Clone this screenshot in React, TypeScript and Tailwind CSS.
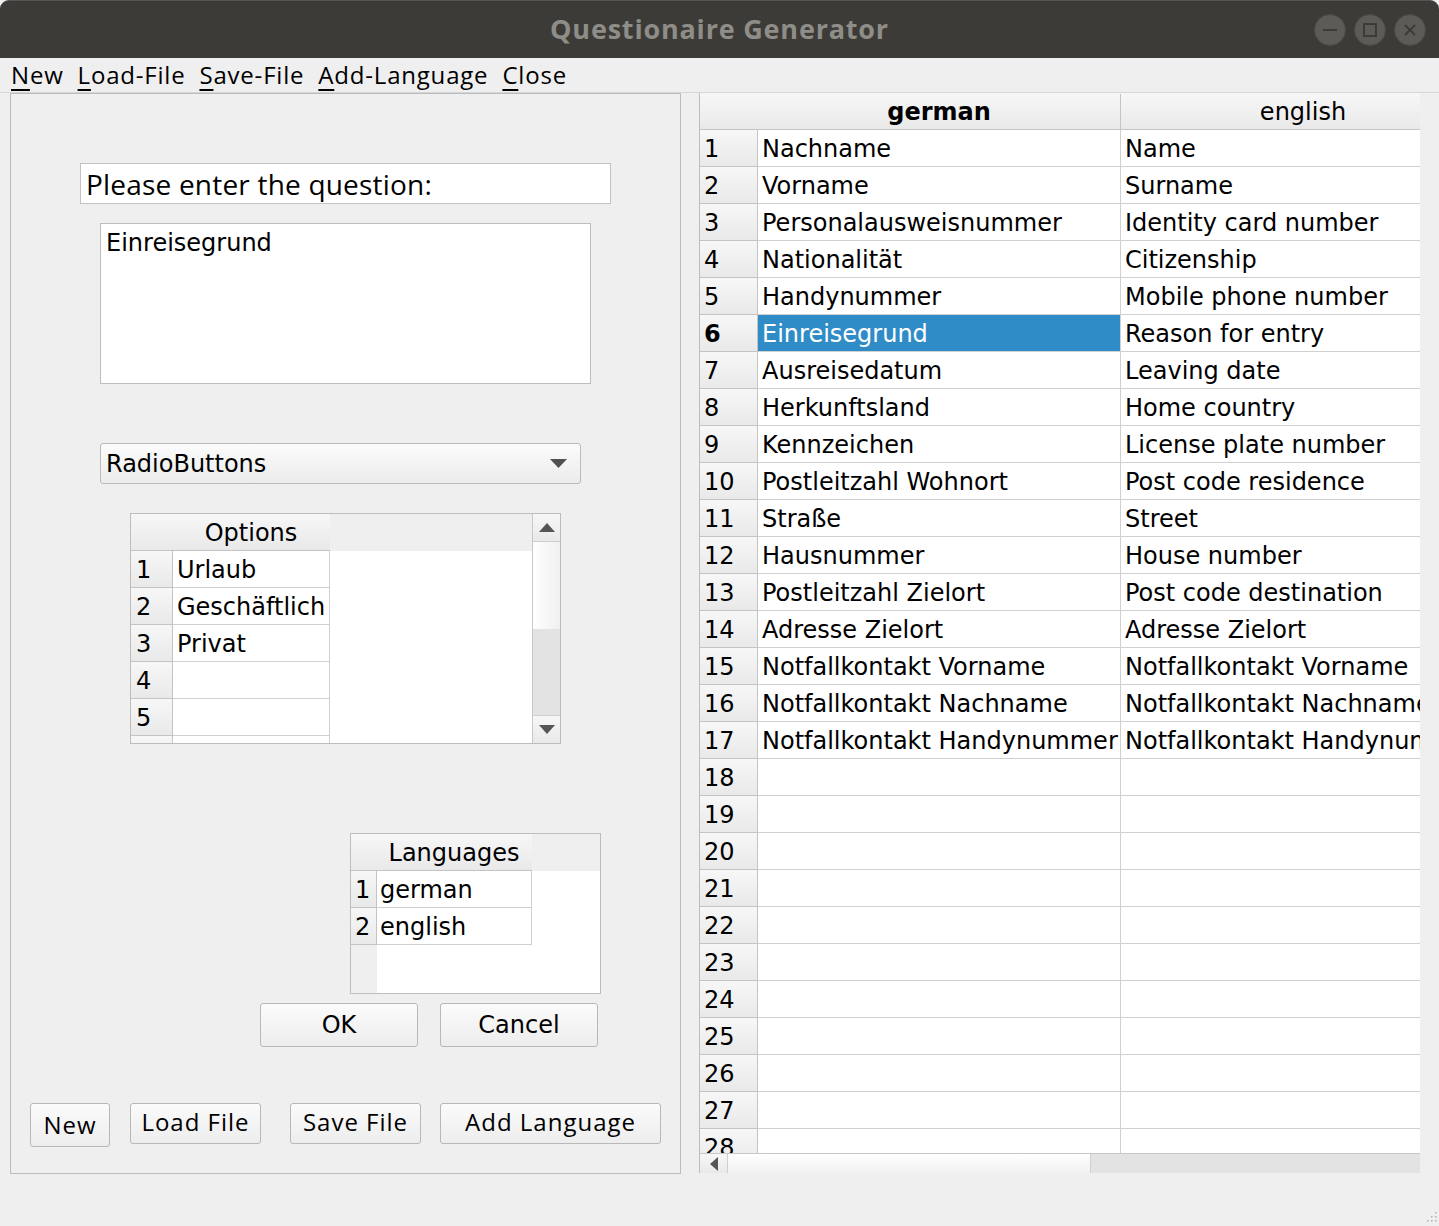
import React from "react";

const DV = "font-['DejaVu_Sans',sans-serif]";
const UB = "font-['Open_Sans',sans-serif]";

const rows: [string, string][] = [
  ["Nachname", "Name"],
  ["Vorname", "Surname"],
  ["Personalausweisnummer", "Identity card number"],
  ["Nationalität", "Citizenship"],
  ["Handynummer", "Mobile phone number"],
  ["Einreisegrund", "Reason for entry"],
  ["Ausreisedatum", "Leaving date"],
  ["Herkunftsland", "Home country"],
  ["Kennzeichen", "License plate number"],
  ["Postleitzahl Wohnort", "Post code residence"],
  ["Straße", "Street"],
  ["Hausnummer", "House number"],
  ["Postleitzahl Zielort", "Post code destination"],
  ["Adresse Zielort", "Adresse Zielort"],
  ["Notfallkontakt Vorname", "Notfallkontakt Vorname"],
  ["Notfallkontakt Nachname", "Notfallkontakt Nachname"],
  ["Notfallkontakt Handynummer", "Notfallkontakt Handynummer"],
];
while (rows.length < 28) rows.push(["", ""]);

const HDR = "bg-gradient-to-b from-[#f7f7f7] to-[#e9e9e9]";

function MenuItem({ k, rest }: { k: string; rest: string }) {
  return (
    <span>
      <span className="underline decoration-2 underline-offset-[5px]">{k}</span>
      {rest}
    </span>
  );
}

function Btn({ label, className }: { label: string; className: string }) {
  return (
    <div
      className={`flex items-center justify-center rounded-[3px] border border-[#b8b8b8] bg-gradient-to-b from-[#fbfbfb] to-[#ededed] text-[24px] text-black ${className}`}
    >
      {label}
    </div>
  );
}

function TitleBar() {
  return (
    <div className="relative flex h-[58px] items-center justify-center rounded-t-[9px] border-t border-[#55544f] bg-[#3c3b37]">
      <span className={`${UB} text-[27px] font-bold tracking-[0.8px] text-[#8e8d88]`}>Questionaire Generator</span>
      <div className="absolute right-[13px] top-[13px] flex gap-[8px]">
        <div className="flex h-[32px] w-[32px] items-center justify-center rounded-full border border-[#4a4945] bg-[#5c5b56]">
          <div className="h-[2px] w-[14px] bg-[#3c3b37]" />
        </div>
        <div className="flex h-[32px] w-[32px] items-center justify-center rounded-full border border-[#4a4945] bg-[#5c5b56]">
          <div className="h-[14px] w-[14px] border-2 border-[#3c3b37]" />
        </div>
        <div className="flex h-[32px] w-[32px] items-center justify-center rounded-full border border-[#4a4945] bg-[#5c5b56]">
          <svg width="14" height="14" viewBox="0 0 14 14">
            <path d="M2 2 L12 12 M12 2 L2 12" stroke="#3c3b37" strokeWidth="2" />
          </svg>
        </div>
      </div>
    </div>
  );
}

function OptionsTable() {
  const opts = ["Urlaub", "Geschäftlich", "Privat", "", "", ""];
  return (
    <div className={`ml-[119px] mt-[29px] flex h-[231px] w-[431px] border border-[#bdbdbd] bg-white ${DV} text-[24px]`}>
      <div className="flex h-full w-[402px] flex-col overflow-hidden">
        <div className="flex h-[37px] shrink-0">
          <div className={`flex w-[199px] items-center justify-center border-b border-[#c4c4c4] pt-[1px] ${HDR}`}>
            <span className="pl-[41px]">Options</span>
          </div>
          <div className="flex-1 bg-[#efefef]" />
        </div>
        {opts.map((o, i) => (
          <div key={i} className="flex h-[37px] shrink-0">
            <div className={`flex w-[42px] items-center border-b border-r border-[#c4c4c4] pl-[5px] pt-[1px] ${HDR}`}>
              {i < 5 ? i + 1 : ""}
            </div>
            <div className="flex w-[157px] items-center border-b border-r border-[#d0d0d0] pl-[4px] pt-[1px]">{o}</div>
          </div>
        ))}
      </div>
      <div className="flex w-[28px] flex-col border-l border-[#c8c8c8]">
        <div className={`flex h-[28px] items-center justify-center border-b border-[#cfcfcf] ${HDR}`}>
          <svg width="16" height="9" viewBox="0 0 16 9">
            <polygon points="0,9 16,9 8,0" fill="#555" />
          </svg>
        </div>
        <div className="h-[87px] bg-gradient-to-r from-[#ffffff] to-[#f0f0f0]" />
        <div className="flex-1 bg-[#e3e3e3]" />
        <div className={`flex h-[28px] items-center justify-center border-t border-[#cfcfcf] ${HDR}`}>
          <svg width="16" height="9" viewBox="0 0 16 9">
            <polygon points="0,0 16,0 8,9" fill="#555" />
          </svg>
        </div>
      </div>
    </div>
  );
}

function LanguagesTable() {
  return (
    <div className={`ml-[339px] mt-[89px] flex h-[161px] w-[251px] flex-col overflow-hidden border border-[#bdbdbd] bg-white ${DV} text-[24px]`}>
      <div className="flex h-[37px] shrink-0">
        <div className={`flex w-[181px] items-center justify-center border-b border-[#c4c4c4] pt-[1px] ${HDR}`}>
          <span className="pl-[25px]">Languages</span>
        </div>
        <div className="flex-1 bg-[#efefef]" />
      </div>
      {["german", "english"].map((l, i) => (
        <div key={i} className="flex h-[37px] shrink-0">
          <div className={`flex w-[26px] items-center border-b border-r border-[#c4c4c4] pl-[4px] pt-[1px] ${HDR}`}>{i + 1}</div>
          <div className="flex w-[155px] items-center border-b border-r border-[#d0d0d0] pl-[3px] pt-[1px]">{l}</div>
        </div>
      ))}
      <div className="flex flex-1">
        <div className="w-[26px] bg-[#efefef]" />
      </div>
    </div>
  );
}

function LeftPanel() {
  return (
    <div className="ml-[10px] flex h-[1081px] w-[671px] flex-col border border-[#bcbcbc] bg-[#efefef]">
      <div className={`ml-[69px] mt-[69px] flex h-[41px] w-[531px] items-center border border-[#c2c2c2] bg-white pl-[5px] ${UB} text-[28px] tracking-[0.2px]`}>
        Please enter the question:
      </div>
      <div className={`ml-[89px] mt-[19px] h-[161px] w-[491px] border border-[#bdbdbd] bg-white pl-[5px] pt-[1px] ${DV} text-[24px]`}>
        Einreisegrund
      </div>
      <div className={`ml-[89px] mt-[59px] flex h-[41px] w-[481px] items-center justify-between rounded-[3px] border border-[#bababa] bg-gradient-to-b from-[#fbfbfb] to-[#ececec] pl-[5px] pr-[13px] ${DV} text-[24px]`}>
        <span className="pt-[1px]">RadioButtons</span>
        <svg width="17" height="9" viewBox="0 0 17 9">
          <polygon points="0,0 17,0 8.5,9" fill="#505050" />
        </svg>
      </div>
      <OptionsTable />
      <LanguagesTable />
      <div className={`mt-[9px] flex ${DV}`}>
        <Btn label="OK" className="ml-[249px] h-[44px] w-[158px]" />
        <Btn label="Cancel" className="ml-[22px] h-[44px] w-[158px]" />
      </div>
      <div className={`mt-[56px] flex items-start ${UB} tracking-[1px]`}>
        <Btn label="New" className="ml-[19px] h-[44px] w-[80px]" />
        <Btn label="Load File" className="ml-[20px] h-[41px] w-[131px] pb-[3px]" />
        <Btn label="Save File" className="ml-[29px] h-[41px] w-[131px] pb-[3px]" />
        <Btn label="Add Language" className="ml-[19px] h-[41px] w-[221px] pb-[3px]" />
      </div>
    </div>
  );
}

function MainTable() {
  return (
    <div className={`ml-[18px] flex h-[1080px] w-[721px] flex-col overflow-hidden border-l border-[#bdbdbd] bg-white ${DV} text-[24px]`}>
      <div className={`flex h-[37px] shrink-0 border-b border-[#c4c4c4] pt-[1px] ${HDR}`}>
        <div className="w-[58px] shrink-0" />
        <div className="flex w-[363px] shrink-0 items-center justify-center border-r border-[#c4c4c4] font-bold">german</div>
        <div className="flex w-[364px] shrink-0 items-center justify-center">english</div>
      </div>
      <div className="h-[1023px] shrink-0 overflow-hidden">
        {rows.map(([g, e], i) => {
          const sel = i === 5;
          return (
            <div key={i} className="flex h-[37px] shrink-0">
              <div className={`flex w-[58px] shrink-0 items-center border-b border-r border-[#c4c4c4] pl-[4px] pt-[1px] ${HDR} ${sel ? "font-bold" : ""}`}>
                {i + 1}
              </div>
              <div
                className={`flex w-[363px] shrink-0 items-center overflow-hidden whitespace-nowrap border-b border-r border-[#d0d0d0] pl-[4px] pt-[1px] ${sel ? "bg-[#308cc6] text-white" : ""}`}
              >
                {g}
              </div>
              <div className="flex w-[364px] shrink-0 items-center overflow-hidden whitespace-nowrap border-b border-[#d0d0d0] pl-[4px] pt-[1px]">
                {e}
              </div>
            </div>
          );
        })}
      </div>
      <div className="flex h-[20px] shrink-0 border-t border-[#c8c8c8]">
        <div className={`flex w-[28px] items-center justify-center border-r border-[#cfcfcf] ${HDR}`}>
          <svg width="8" height="14" viewBox="0 0 8 14">
            <polygon points="8,0 8,14 0,7" fill="#555" />
          </svg>
        </div>
        <div className="w-[363px] border-r border-[#d0d0d0] bg-gradient-to-b from-[#ffffff] to-[#f1f1f1]" />
        <div className="flex-1 bg-[#e3e3e3]" />
      </div>
    </div>
  );
}

export default function App() {
  return (
    <div className="relative h-[1226px] w-[1439px] overflow-hidden bg-[#efefef] text-black">
      <TitleBar />
      <div className={`flex h-[35px] items-center gap-[14px] border-b border-[#d6d6d6] pl-[11px] ${UB} text-[24px] tracking-[0.8px]`}>
        <MenuItem k="N" rest="ew" />
        <MenuItem k="L" rest="oad-File" />
        <MenuItem k="S" rest="ave-File" />
        <MenuItem k="A" rest="dd-Language" />
        <MenuItem k="C" rest="lose" />
      </div>
      <div className="flex">
        <LeftPanel />
        <MainTable />
      </div>
      <svg className="absolute bottom-[2px] right-[2px]" width="10" height="14" viewBox="0 0 10 14">
        {[
          [8, 2], [8, 6], [8, 10], [4, 6], [4, 10], [0, 10],
        ].map(([x, y], i) => (
          <rect key={i} x={x} y={y} width="1.5" height="1.5" fill="#b0b0b0" />
        ))}
      </svg>
    </div>
  );
}
